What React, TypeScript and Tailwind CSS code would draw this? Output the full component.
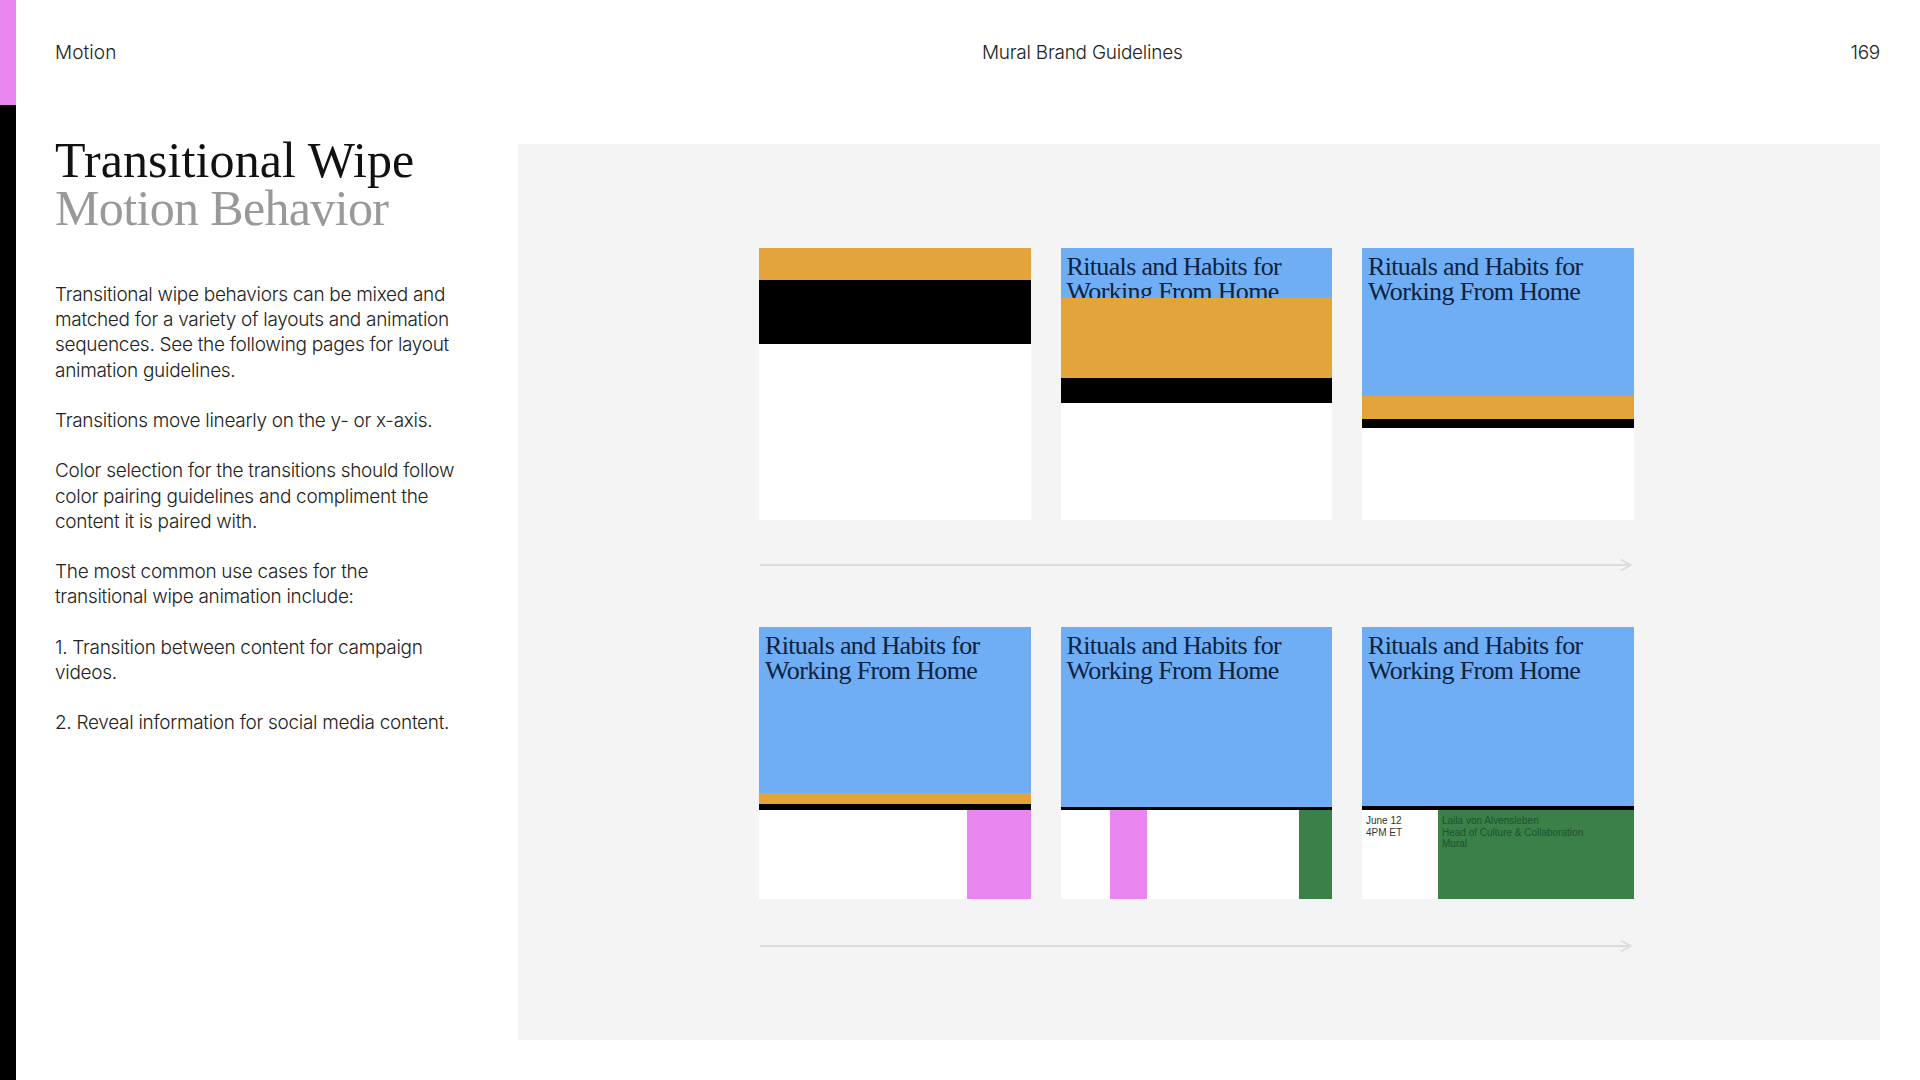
const serif = "font-['Liberation_Serif',serif]";

function Rituals() {
  return (
    <p className={`${serif} pl-[6px] pt-[7px] text-[26px] leading-[24.5px] tracking-[-0.65px] text-[#0d2340]`}>
      Rituals and Habits for
      <br />
      Working From Home
    </p>
  );
}

function Blue({ h }: { h: string }) {
  return (
    <div className={`${h} shrink-0 overflow-hidden bg-[#6fadf5]`}>
      <Rituals />
    </div>
  );
}

function Arrow() {
  return (
    <svg className="block h-[14px] w-[874px]" viewBox="0 0 874 14" fill="none" stroke="#dcdcdc">
      <path d="M1 7H872" strokeWidth="2" />
      <path d="M862 1.5L872 7L862 12.5" strokeWidth="1.5" />
    </svg>
  );
}

export default function App() {
  return (
    <div className="flex h-[1080px] w-[1920px] overflow-hidden bg-white font-['Inter',sans-serif] font-light text-[#222]">
      {/* Цветная полоса слева */}
      <div className="flex w-[16px] shrink-0 flex-col">
        <div className="h-[105px] bg-[#ea86f0]" />
        <div className="flex-1 bg-black" />
      </div>

      <div className="flex flex-1 flex-col pl-[39px] pr-[40px]">
        <header className="flex h-[144px] shrink-0 pt-[41px] text-[19px] leading-[24px] tracking-[-0.25px]">
          <span className="w-[927px] tracking-[0.1px]">Motion</span>
          <span>Mural Brand Guidelines</span>
          <span className="ml-auto text-right">169</span>
        </header>

        <div className="flex">
          <aside className="w-[463px] shrink-0">
            <h1 className={`${serif} -mt-[8px] text-[50px] leading-[48px] text-[#111]`}>
              <span className="tracking-[0.1px]">Transitional Wipe</span>
              <br />
              <span className="tracking-[-0.65px] text-[#999]">Motion Behavior</span>
            </h1>
            <div className="mt-[50px] flex flex-col gap-[25.2px] text-[19px] leading-[25.2px] tracking-[-0.3px]">
              <p>
                Transitional wipe behaviors can be mixed and
                <br />
                matched for a variety of layouts and animation
                <br />
                sequences. See the following pages for layout
                <br />
                animation guidelines.
              </p>
              <p>Transitions move linearly on the y- or x-axis.</p>
              <p>
                Color selection for the transitions should follow
                <br />
                color pairing guidelines and compliment the
                <br />
                content it is paired with.
              </p>
              <p>
                The most common use cases for the
                <br />
                transitional wipe animation include:
              </p>
              <p>
                1. Transition between content for campaign
                <br />
                videos.
              </p>
              <p>2. Reveal information for social media content.</p>
            </div>
          </aside>

          <section className="h-[896px] flex-1 bg-[#f4f4f4] pl-[241px] pt-[104px]">
            <div className="flex gap-[30px]">
              <div className="flex h-[272px] w-[271.5px] flex-col bg-white">
                <div className="h-[32px] bg-[#e3a43c]" />
                <div className="h-[64px] bg-black" />
              </div>
              <div className="flex h-[272px] w-[271.5px] flex-col bg-white">
                <Blue h="h-[50px]" />
                <div className="h-[80px] bg-[#e3a43c]" />
                <div className="h-[25px] bg-black" />
              </div>
              <div className="flex h-[272px] w-[271.5px] flex-col bg-white">
                <Blue h="h-[148px]" />
                <div className="h-[23px] bg-[#e3a43c]" />
                <div className="h-[9px] bg-black" />
              </div>
            </div>

            <div className="mt-[38px]">
              <Arrow />
            </div>

            <div className="mt-[55px] flex gap-[30px]">
              <div className="flex h-[272px] w-[271.5px] flex-col bg-white">
                <Blue h="h-[166px]" />
                <div className="h-[11px] bg-[#e3a43c]" />
                <div className="h-[6px] bg-black" />
                <div className="flex flex-1 justify-end">
                  <div className="w-[64px] bg-[#ea86f0]" />
                </div>
              </div>
              <div className="flex h-[272px] w-[271.5px] flex-col bg-white">
                <Blue h="h-[179.5px]" />
                <div className="h-[3.5px] bg-black" />
                <div className="flex flex-1 justify-between pl-[49px]">
                  <div className="w-[37px] bg-[#ea86f0]" />
                  <div className="w-[33px] bg-[#3a8048]" />
                </div>
              </div>
              <div className="flex h-[272px] w-[271.5px] flex-col bg-white">
                <Blue h="h-[179px]" />
                <div className="h-[4px] bg-black" />
                <div className="flex flex-1 font-['Liberation_Sans',sans-serif] text-[10px] font-normal leading-[11.5px]">
                  <div className="w-[76px] pl-[4px] pt-[5px] text-[#333]">
                    June 12
                    <br />
                    4PM ET
                  </div>
                  <div className="flex-1 bg-[#3a8048] pl-[4px] pt-[5px] text-[#1f5230]">
                    Laila von Alvensleben
                    <br />
                    Head of Culture &amp; Collaboration
                    <br />
                    Mural
                  </div>
                </div>
              </div>
            </div>

            <div className="mt-[40px]">
              <Arrow />
            </div>
          </section>
        </div>
      </div>
    </div>
  );
}
